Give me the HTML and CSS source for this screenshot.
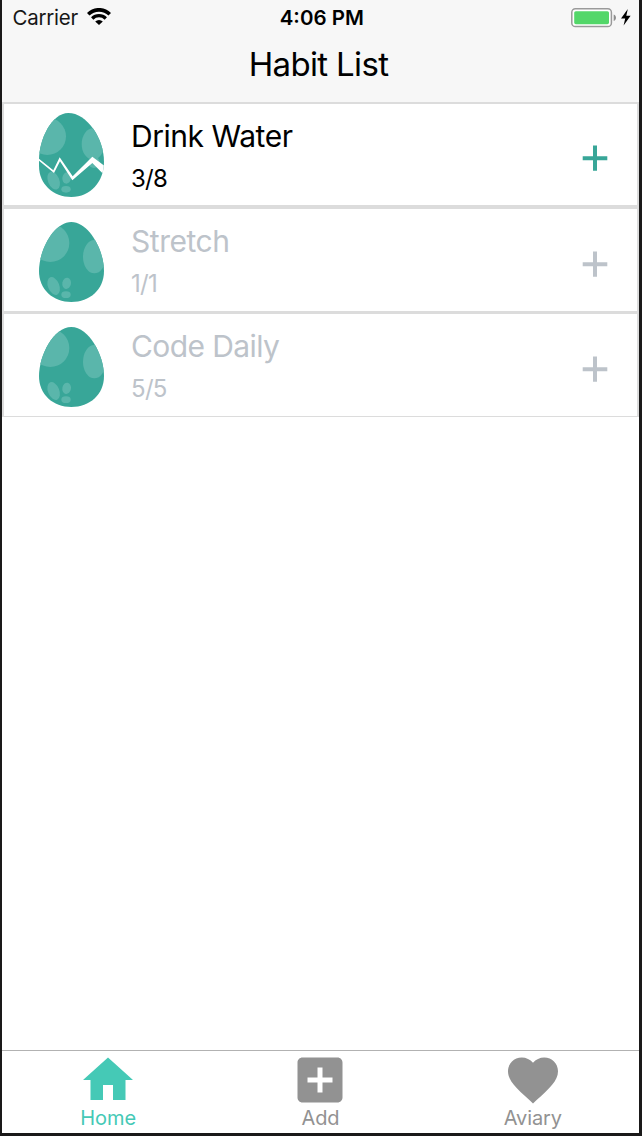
FILE: index.html
```html
<!DOCTYPE html>
<html lang="en">
<head>
<meta charset="utf-8">
<title>Habit List</title>
<link rel="stylesheet" href="styles.css">
</head>
<body>
<svg class="defs" aria-hidden="true">
  <defs>
    <clipPath id="shell"><path d="M97 0C150 0 195 85 195 147C195 203 152 240 97 240C42 240 0 203 0 147C0 85 44 0 97 0Z"/></clipPath>
    <clipPath id="shell-cracked"><path d="M88 0C143 0 195 75 195 147C195 205 155 252 97 252C42 252 0 213 0 159V140C0 80 38 0 88 0Z"/></clipPath>
    <symbol id="egg" viewBox="0 0 195 240">
      <g clip-path="url(#shell)">
        <rect width="195" height="240" fill="#38a698"/>
        <g fill="#5ab6ab">
          <circle cx="34" cy="63" r="57"/>
          <ellipse cx="166" cy="104" rx="34" ry="50"/>
          <ellipse cx="44" cy="192" rx="17" ry="28" transform="rotate(-22 44 192)"/>
          <ellipse cx="83" cy="184" rx="13" ry="17" transform="rotate(10 83 184)"/>
          <ellipse cx="81" cy="218" rx="14" ry="10"/>
        </g>
      </g>
    </symbol>
    <symbol id="egg-cracked" viewBox="0 0 195 252">
      <g clip-path="url(#shell-cracked)">
        <rect width="195" height="252" fill="#38a698"/>
        <g fill="#5ab6ab">
          <circle cx="25" cy="70" r="56"/>
          <ellipse cx="162" cy="93" rx="34" ry="47"/>
          <ellipse cx="165" cy="148" rx="17" ry="17"/>
          <ellipse cx="44" cy="203" rx="17" ry="28" transform="rotate(-22 44 203)"/>
          <ellipse cx="83" cy="195" rx="13" ry="17" transform="rotate(10 83 195)"/>
          <ellipse cx="81" cy="229" rx="14" ry="10"/>
        </g>
        <path fill="#fff" d="M-2 136L43 172L62 133L101 190L160 131L197 159V187L160 150L100 202L63 145L45 180L-2 142Z"/>
      </g>
    </symbol>
    <symbol id="plus" viewBox="0 0 44 44"><path d="M20 9.6h4v10.6h10.3v4H24v10.6h-4V24.200H9.700v-4H20z"/></symbol>
  </defs>
</svg>
<div class="phone">
  <header class="header">
    <div class="status">
      <div class="status-left">
        <span class="carrier">Carrier</span>
        <svg class="wifi" viewBox="0 0 24 17">
          <path d="M1.2 6.3A15.200 15.200 0 0 1 22.800 6.300" fill="none" stroke="#000" stroke-width="3.700"/>
          <path d="M5.200 10.500A9.700 9.700 0 0 1 18.800 10.500" fill="none" stroke="#000" stroke-width="3.300"/>
          <path d="M12 17L8.200 13.600A5.400 5.400 0 0 1 15.800 13.600Z"/>
        </svg>
      </div>
      <span class="time">4:06 PM</span>
      <div class="status-right">
        <svg class="battery" viewBox="0 0 60 20">
          <rect x=".8" y=".8" width="39.6" height="17.8" rx="3.6" fill="#fff" stroke="#9a9a9a" stroke-width="1.5"/>
          <rect x="3.2" y="3.2" width="34.8" height="13" rx="1.6" fill="#53d769"/>
          <path d="M42.7 6.4C45.7 7 45.7 12.2 42.7 12.9Z" fill="#8d8d8d"/>
          <path d="M56.8 1L50 10.5H54.2L52.6 17.5L59.6 7.8H55.3Z"/>
        </svg>
      </div>
    </div>
    <h1 class="title">Habit List</h1>
  </header>
  <main class="list">
    <section class="habit first">
      <div class="egg"><svg class="egg-open"><use href="#egg-cracked"/></svg></div>
      <div class="copy"><div class="name">Drink Water</div><div class="count">3/8</div></div>
      <svg class="plus"><use href="#plus"/></svg>
    </section>
    <section class="habit done">
      <div class="egg"><svg class="egg-whole"><use href="#egg"/></svg></div>
      <div class="copy"><div class="name">Stretch</div><div class="count">1/1</div></div>
      <svg class="plus"><use href="#plus"/></svg>
    </section>
    <section class="habit done">
      <div class="egg"><svg class="egg-whole"><use href="#egg"/></svg></div>
      <div class="copy"><div class="name tight">Code Daily</div><div class="count">5/5</div></div>
      <svg class="plus"><use href="#plus"/></svg>
    </section>
  </main>
  <nav class="tabs">
    <div class="tab active">
      <svg viewBox="0 0 24 24"><path d="M10 20v-6h4v6h5v-8h3L12 3 2 12h3v8z"/></svg>
      <span>Home</span>
    </div>
    <div class="tab">
      <svg viewBox="0 0 24 24"><path d="M19 3H5c-1.11 0-2 .9-2 2v14c0 1.1.89 2 2 2h14c1.1 0 2-.9 2-2V5c0-1.1-.9-2-2-2zm-2 10h-4v4h-2v-4H7v-2h4V7h2v4h4v2z"/></svg>
      <span>Add</span>
    </div>
    <div class="tab">
      <svg viewBox="0 0 24 24"><path d="M12 21.35l-1.45-1.32C5.4 15.36 2 12.28 2 8.5 2 5.42 4.42 3 7.5 3c1.74 0 3.41.81 4.5 2.09C13.09 3.81 14.76 3 16.5 3 19.58 3 22 5.42 22 8.5c0 3.78-3.4 6.86-8.55 11.54L12 21.35z"/></svg>
      <span>Aviary</span>
    </div>
  </nav>
</div>
</body>
</html>
```
FILE: styles.css
```css
* { box-sizing: border-box; }
body {
  margin: 0;
  background: #1a1919;
  font-family: Inter, "Liberation Sans", sans-serif;
  color: #000;
}
.defs { display: block; width: 0; height: 0; }
.phone {
  display: flex;
  flex-direction: column;
  height: 1136px;
  padding: 0 3px 3px 2px;
}
.header { height: 102px; background: #f7f7f7; }
.status {
  display: grid;
  grid-template-columns: 1fr auto 1fr;
  align-items: center;
  height: 35px;
  padding: 0 8px 0 10.5px;
}
.status-left { display: flex; align-items: center; gap: 9.5px; }
.carrier { font-size: 20.5px; line-height: 34px; letter-spacing: -.25px; color: #161616; }
.wifi { width: 24px; height: 17px; margin-top: -2px; }
.time { font-size: 20.5px; font-weight: 600; line-height: 34px; }
.status-right { display: flex; justify-content: flex-end; }
.battery { width: 60px; height: 20px; }
.title {
  margin: 9px 0 0;
  padding-right: 4px;
  font-size: 33px;
  font-weight: 400;
  line-height: 40px;
  letter-spacing: -.65px;
  text-align: center;
}
.list { flex: 1; background: #fff; }
.habit {
  display: flex;
  height: 105px;
  padding: 0 20px 0 21px;
  border: 2px solid #dcdcdc;
  border-bottom-width: 1px;
}
.habit.first { border-bottom-width: 2px; }
.egg { display: flex; flex: none; align-items: flex-start; justify-content: center; width: 93px; }
.egg svg { width: 65px; }
.egg-open { height: 84px; margin-top: 9px; }
.egg-whole { height: 80px; margin-top: 13px; }
.copy { flex: 1; padding: 14px 0 0 13px; }
.name { font-size: 30px; line-height: 36px; letter-spacing: -.45px; }
.name.tight { letter-spacing: -.6px; }
.count { margin-top: 10px; font-size: 24px; line-height: 30px; letter-spacing: -.7px; }
.done .copy { color: #bdc3ca; }
.plus { width: 44px; height: 44px; margin-top: 32px; fill: #38a698; }
.done .plus { margin-top: 33px; fill: #bdc3ca; }
.tabs {
  display: grid;
  grid-template-columns: repeat(3, 1fr);
  height: 83px;
  border-top: 1px solid #b2b2b2;
  background: #fff;
}
.tab { display: flex; flex-direction: column; align-items: center; color: #929292; fill: #929292; }
.tab.active { color: #45c9b6; fill: #45c9b6; }
.tab svg { width: 60px; height: 60px; margin-top: -1px; }
.tab span { margin-top: -4px; font-size: 20px; line-height: 24px; letter-spacing: -.1px; }
```
